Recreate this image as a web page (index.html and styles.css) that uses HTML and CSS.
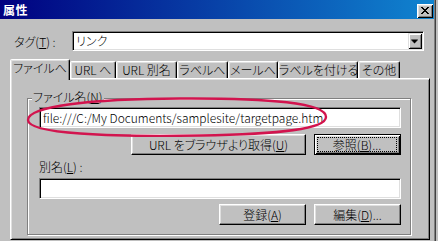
FILE: index.html
```html
<!DOCTYPE html>
<html lang="ja">
<head>
<meta charset="utf-8">
<title>属性</title>
<link rel="stylesheet" href="styles.css">
</head>
<body>
<div class="window">
  <div class="titlebar">
    <span class="title">属性</span>
    <span class="close">
      <svg width="16" height="14" viewBox="0 0 16 14">
        <g fill="#000">
          <rect x="4" y="3" width="2" height="1"/><rect x="10" y="3" width="2" height="1"/>
          <rect x="5" y="4" width="2" height="1"/><rect x="9" y="4" width="2" height="1"/>
          <rect x="6" y="5" width="4" height="1"/>
          <rect x="7" y="6" width="2" height="1"/>
          <rect x="6" y="7" width="4" height="1"/>
          <rect x="5" y="8" width="2" height="1"/><rect x="9" y="8" width="2" height="1"/>
          <rect x="4" y="9" width="2" height="1"/><rect x="10" y="9" width="2" height="1"/>
        </g>
      </svg>
    </span>
  </div>

  <div class="tagrow">
    <span class="taglabel">タグ(<u>T</u>) :</span>
    <div class="combo">
      <span class="combo-text">リンク</span>
      <span class="dropbtn">
        <svg width="14" height="17" viewBox="0 0 14 17">
          <path d="M3 7h7v1H3zM4 8h5v1H4zM5 9h3v1H5zM6 10h1v1H6z" fill="#000"/>
        </svg>
      </span>
    </div>
  </div>

  <div class="tabs">
    <div class="tab selected t1">ファイルへ</div>
    <div class="tab t2">URL へ</div>
    <div class="tab t3">URL 別名</div>
    <div class="tab t4">ラベルへ</div>
    <div class="tab t5">メールへ</div>
    <div class="tab t6">ラベルを付ける</div>
    <div class="tab t7">その他</div>
  </div>

  <div class="panel">
    <div class="group">
      <span class="legend">ファイル名(<u>N</u>)</span>
      <div class="field first">file:///C:/My Documents/samplesite/targetpage.htm</div>
      <div class="btnrow">
        <button class="btn wide">URL をブラウザより取得(<u>U</u>)</button>
        <button class="btn default"><span class="focus">参照(<u>B</u>)...</span></button>
      </div>
      <span class="label">別名(<u>L</u>) :</span>
      <div class="field"></div>
      <div class="btnrow">
        <button class="btn">登録(<u>A</u>)</button>
        <button class="btn">編集(<u>D</u>)...</button>
      </div>
    </div>
  </div>

  <svg class="annotation" width="438" height="241" viewBox="0 0 438 241">
    <path d="M28 120C28 106 90 99 180 98.5C270 98 326 103 326 117C326 129 280 134 200 135.5C110 137 28 134 28 120Z" fill="none" stroke="#d2144e" stroke-width="2.4"/>
  </svg>
</div>
</body>
</html>
```

FILE: styles.css
```css
* {
  box-sizing: border-box;
}

html, body {
  margin: 0;
  padding: 0;
  background: #c0c0c0;
}

body {
  width: 438px;
  height: 241px;
  overflow: hidden;
  font-family: "Noto Sans CJK JP", "Noto Sans", sans-serif;
  font-size: 12px;
  font-weight: 300;
  font-feature-settings: "palt";
  color: #000;
}

u {
  text-decoration: underline;
  text-underline-offset: 1px;
}

.window {
  position: relative;
  width: 436px;
  height: 241px;
  background: #c0c0c0;
  border-right: 1px solid #404040;
  box-shadow: inset -1px 0 #808080;
  display: flex;
  flex-direction: column;
}

.titlebar {
  height: 19px;
  width: 434px;
  flex: none;
  display: flex;
  align-items: flex-start;
  justify-content: space-between;
  padding: 0 1px 0 3px;
  background: linear-gradient(to right, #000080, #1084d0);
}

.title {
  color: #fff;
  font-weight: bold;
  font-size: 12px;
  line-height: 19px;
  letter-spacing: 0.5px;
}

.close {
  margin-top: 4px;
  width: 16px;
  height: 14px;
  display: block;
  background: #c0c0c0;
  box-shadow: inset 1px 1px #fff, inset -1px -1px #000, inset 2px 2px #dfdfdf, inset -2px -2px #808080;
}

.close svg {
  display: block;
}

.tagrow {
  display: flex;
  align-items: center;
  margin-top: 12px;
  padding-left: 14px;
  height: 20px;
}

.taglabel {
  width: 58px;
  line-height: 13px;
}

.combo {
  width: 352px;
  height: 20px;
  background: #fff;
  border: 1px solid;
  border-color: #808080 #fff #fff #808080;
  box-shadow: inset 1px 1px #000, inset -1px -1px #dfdfdf;
  display: flex;
  align-items: center;
  justify-content: space-between;
  padding: 1px 1px 1px 2px;
}

.combo-text {
  padding-left: 1px;
  line-height: 16px;
}

.dropbtn {
  width: 14px;
  height: 16px;
  display: block;
  background: #c0c0c0;
  box-shadow: inset 1px 1px #dfdfdf, inset -1px -1px #000, inset 2px 2px #fff, inset -2px -2px #808080;
}

.dropbtn svg {
  display: block;
  width: 14px;
  height: 16px;
}

.tabs {
  display: flex;
  align-items: flex-end;
  height: 19px;
  margin-top: 8px;
  padding-left: 10px;
}

.tab {
  height: 17px;
  border: 1px solid;
  border-bottom: 0;
  border-color: #fff #000 transparent #fff;
  border-radius: 2px 2px 0 0;
  box-shadow: inset -1px 0 #808080, inset 1px 1px #dfdfdf;
  text-align: center;
  line-height: 13px;
  padding-top: 1px;
  white-space: nowrap;
  background: #c0c0c0;
}

.tab.selected {
  position: relative;
  z-index: 2;
  height: 21px;
  margin-bottom: -2px;
}

.t1 { width: 60px; }
.t2 { width: 46px; }
.t3 { width: 61px; }
.t4 { width: 51px; }
.t5 { width: 50px; }
.t6 { width: 80px; }
.t7 { width: 42px; }

.panel {
  margin-left: 10px;
  width: 420px;
  height: 162px;
  flex: none;
  border: 1px solid;
  border-color: #fff #000 #000 #fff;
  box-shadow: inset 1px 1px #dfdfdf, inset -1px -1px #808080;
  padding: 19px 0 0 16px;
}

.group {
  width: 384px;
  border: 1px solid #808080;
  box-shadow: inset 1px 1px #fff, 1px 1px #fff;
  display: flex;
  flex-direction: column;
  align-items: flex-start;
  padding: 0 9px 9px 11px;
}

.legend {
  margin-top: -9px;
  margin-left: -7px;
  padding: 0 1px;
  line-height: 13px;
  background: #c0c0c0;
}

.field {
  width: 362px;
  height: 21px;
  margin-top: 5px;
  background: #fff;
  border: 1px solid;
  border-color: #808080 #fff #fff #808080;
  box-shadow: inset 1px 1px #000, inset -1px -1px #dfdfdf;
  padding: 0 0 0 3px;
  line-height: 19px;
  white-space: nowrap;
  overflow: hidden;
}

.field.first {
  margin-top: 4px;
}

.label {
  margin-top: 5px;
  line-height: 13px;
}

.btnrow {
  width: 362px;
  display: flex;
  justify-content: flex-end;
  gap: 8px;
  margin-top: 6px;
}

.btnrow + .label {
  margin-top: 5px;
}

.field + .btnrow {
  margin-top: 5px;
}

.field.first + .btnrow {
  margin-top: 6px;
}

.btn {
  width: 87px;
  height: 21px;
  margin: 0;
  padding: 0;
  font: inherit;
  font-feature-settings: "palt";
  color: #000;
  background: #c0c0c0;
  border: 1px solid;
  border-color: #fff #000 #000 #fff;
  box-shadow: inset -1px -1px #808080, inset 1px 1px #dfdfdf;
  line-height: 17px;
  text-align: center;
  white-space: nowrap;
}

.btn.wide {
  width: 175px;
}

.btn.default {
  border: 1px solid #000;
  box-shadow: inset 1px 1px #fff, inset -1px -1px #000, inset 2px 2px #dfdfdf, inset -2px -2px #808080;
  padding: 2px 3px 2px 2px;
  display: flex;
}

.focus {
  flex: 1;
  border: 1px dotted #000;
  line-height: 13px;
  display: block;
}

.annotation {
  position: absolute;
  left: 0;
  top: 0;
  pointer-events: none;
}
```
